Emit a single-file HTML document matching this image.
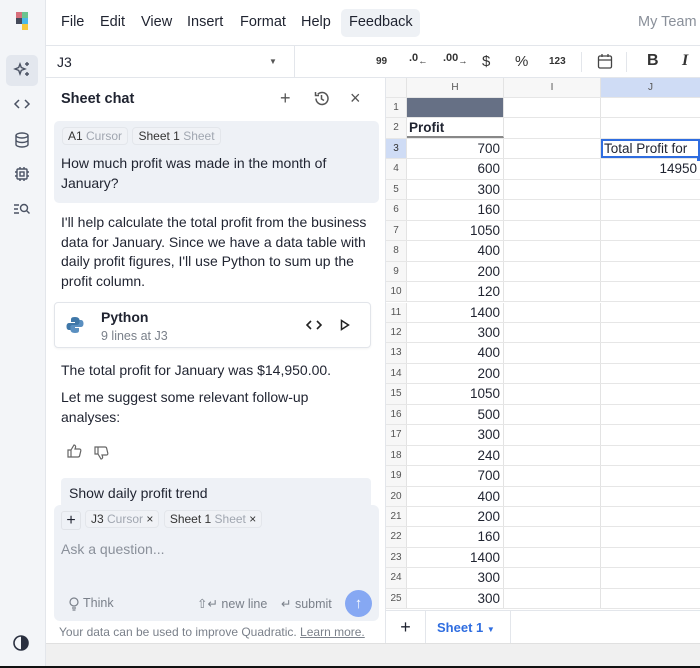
<!DOCTYPE html>
<html><head><meta charset="utf-8"><style>
*{box-sizing:border-box;margin:0;padding:0}
body{width:700px;height:668px;overflow:hidden;background:#fff;font-family:"Liberation Sans",sans-serif;color:#1f2330;position:relative}
.abs{position:absolute}
.rail{left:0;top:0;width:46px;height:666px;background:#f3f5f8;border-right:1px solid #e3e6eb}
.menu{left:46px;top:0;width:654px;height:46px;border-bottom:1px solid #e3e6eb;font-size:14.5px}
.menu span{position:absolute;top:14px}
.fbar{left:46px;top:46px;width:654px;height:32px;border-bottom:1px solid #e3e6eb}
.chat{left:46px;top:78px;width:340px;height:565px;border-right:1px solid #e3e6eb}
.t{font-size:14px;line-height:19.5px}
.chip{display:inline-block;border:1px solid #e3e6eb;border-radius:4px;padding:1px 5px;font-size:12px;color:#333;background:#f0f2f6}
.chip i{font-style:normal;color:#a0a6b0}
.grid{left:386px;top:78px;width:314px}
.row{position:absolute;left:0;width:314px;border-bottom:1px solid #e6e6e6;font-size:13.5px}
.rn{position:absolute;left:0;width:21px;text-align:center;font-size:10px;color:#555;background:#f7f7f7;height:100%;border-right:1px solid #e3e3e3}
.h{position:absolute;left:21px;width:97px;text-align:right;padding-right:3px;height:100%;border-right:1px solid #e3e3e3}
.i{position:absolute;left:118px;width:97px;height:100%;border-right:1px solid #e3e3e3}
.j{position:absolute;left:215px;width:99px;height:100%;text-align:right;padding-right:3px}
.ic{position:absolute;font-size:12px;color:#333}
</style></head><body>
<div class="abs rail">
 <div class="abs" style="left:16px;top:12px;width:6px;height:6px;background:#d76f7c"></div>
 <div class="abs" style="left:22px;top:12px;width:6px;height:6px;background:#6cc38f"></div>
 <div class="abs" style="left:16px;top:18px;width:6px;height:6px;background:#444a5a"></div>
 <div class="abs" style="left:22px;top:18px;width:6px;height:6px;background:#4ab8e8"></div>
 <div class="abs" style="left:22px;top:24px;width:6px;height:6px;background:#f7c93c"></div>
 <div class="abs" style="left:6px;top:55px;width:32px;height:31px;background:#e3e7ee;border-radius:5px"></div>
 <svg class="abs" style="left:13px;top:60px" width="20" height="20" viewBox="0 0 20 20" fill="none" stroke="#4a5263" stroke-width="1.4"><path d="M7 4l1.3 3.5L12 9l-3.7 1.4L7 14l-1.3-3.6L2 9l3.7-1.5z"/><path d="M14 2v4M12 4h4M14 12v4M12 14h4"/></svg>
 <svg class="abs" style="left:13px;top:96px" width="18" height="16" fill="none" stroke="#4a5263" stroke-width="1.5"><path d="M6 4L2 8l4 4M12 4l4 4-4 4"/></svg>
 <svg class="abs" style="left:14px;top:132px" width="16" height="16" fill="none" stroke="#4a5263" stroke-width="1.4"><ellipse cx="8" cy="3.5" rx="6" ry="2.5"/><path d="M2 3.5v9c0 1.4 2.7 2.5 6 2.5s6-1.1 6-2.5v-9M2 8c0 1.4 2.7 2.5 6 2.5s6-1.1 6-2.5"/></svg>
 <svg class="abs" style="left:14px;top:166px" width="16" height="16" fill="none" stroke="#4a5263" stroke-width="1.4"><rect x="3" y="3" width="10" height="10" rx="1"/><rect x="6" y="6" width="4" height="4"/><path d="M6 1v2M10 1v2M6 13v2M10 13v2M1 6h2M1 10h2M13 6h2M13 10h2"/></svg>
 <svg class="abs" style="left:13px;top:202px" width="18" height="14" fill="none" stroke="#4a5263" stroke-width="1.4"><path d="M1 3h5M1 7h4M1 11h5"/><circle cx="11" cy="6" r="3.5"/><path d="M13.5 8.5l3 3"/></svg>
 <svg class="abs" style="left:12px;top:634px" width="18" height="18"><circle cx="9" cy="9" r="7" fill="none" stroke="#2a3040" stroke-width="1.6"/><path d="M9 2a7 7 0 0 1 0 14z" fill="#2a3040"/></svg>
</div>
<div class="abs menu">
 <span style="left:15px">File</span><span style="left:54px">Edit</span><span style="left:95px">View</span><span style="left:141px">Insert</span><span style="left:194px">Format</span><span style="left:255px">Help</span>
 <div class="abs" style="left:295px;top:9px;width:79px;height:28px;background:#eef1f5;border-radius:5px"></div><span style="left:303px">Feedback</span>
 <span style="left:592px;color:#8a909a">My Team</span>
</div>
<div class="abs fbar">
 <span class="abs" style="left:11px;top:8px;font-size:14px">J3</span>
 <span class="abs" style="left:223px;top:11px;font-size:8px;color:#555">▼</span>
 <div class="abs" style="left:248px;top:0;width:1px;height:32px;background:#e3e6eb"></div>
 <span class="ic" style="left:330px;top:10px;font-size:10px;font-weight:bold">99</span>
 <span class="ic" style="left:363px;top:6px;font-size:11px;font-weight:bold">.0<sub>←</sub></span>
 <span class="ic" style="left:397px;top:6px;font-size:11px;font-weight:bold">.00<sub>→</sub></span>
 <span class="ic" style="left:436px;top:7px;font-size:15px">$</span>
 <span class="ic" style="left:469px;top:7px;font-size:15px">%</span>
 <span class="ic" style="left:503px;top:10px;font-size:10px;font-weight:bold">123</span>
 <div class="abs" style="left:535px;top:6px;width:1px;height:20px;background:#e3e6eb"></div>
 <svg class="abs" style="left:551px;top:7px" width="16" height="17" fill="none" stroke="#444" stroke-width="1.3"><rect x="1.5" y="3" width="13" height="12" rx="1.5"/><path d="M1.5 7h13M5 1v3M11 1v3"/></svg>
 <div class="abs" style="left:580px;top:6px;width:1px;height:20px;background:#e3e6eb"></div>
 <span class="ic" style="left:601px;top:6px;font-size:16px;font-weight:bold">B</span>
 <span class="ic" style="left:636px;top:6px;font-size:16px;font-style:italic;font-family:'Liberation Serif',serif;font-weight:bold">I</span>
</div>
<div class="abs chat">
 <span class="abs" style="left:15px;top:13px;font-size:14.5px;font-weight:bold">Sheet chat</span>
 <span class="abs" style="left:234px;top:10px;font-size:18px;color:#555">+</span>
 <svg class="abs" style="left:267px;top:12px" width="17" height="17" fill="none" stroke="#555" stroke-width="1.5"><path d="M3 8.5a6 6 0 1 0 1.8-4.3M2.5 2v3.5H6M8.5 5v4l2.5 1.5"/></svg>
 <span class="abs" style="left:304px;top:10px;font-size:18px;color:#555">×</span>
 <div class="abs" style="left:8px;top:43px;width:325px;height:82px;background:#eef1f6;border-radius:5px">
  <div class="abs" style="left:8px;top:6px"><span class="chip">A1 <i>Cursor</i></span> <span class="chip">Sheet 1 <i>Sheet</i></span></div>
  <div class="abs t" style="left:7px;top:33px;width:300px">How much profit was made in the month of January?</div>
 </div>
 <div class="abs t" style="left:15px;top:135px;width:310px">I'll help calculate the total profit from the business data for January. Since we have a data table with daily profit figures, I'll use Python to sum up the profit column.</div>
 <div class="abs" style="left:8px;top:224px;width:317px;height:46px;border:1px solid #e2e5ea;border-radius:4px;box-shadow:0 1px 2px rgba(0,0,0,.05)">
  <svg class="abs" style="left:11px;top:13px" width="18" height="18" viewBox="0 0 18 18"><path d="M9 1c-4 0-4 1.5-4 3v2h4v1H3c-2 0-2.5 2-2.5 3.5S1 14 3 14h1.5v-2.5C4.5 10 6 9 7.5 9h4c1.3 0 2-1 2-2V4c0-1.5-1.5-3-4.5-3z" fill="#3f77a8"/><path d="M9 17c4 0 4-1.5 4-3v-2H9v-1h6c2 0 2.5-2 2.5-3.5S17 4 15 4h-1.5v2.5c0 1.5-1.5 2.5-3 2.5h-4c-1.3 0-2 1-2 2v3c0 1.5 1.5 3 4.5 3z" fill="#5a8fc0"/></svg>
  <span class="abs" style="left:46px;top:6px;font-size:14px;font-weight:bold">Python</span>
  <span class="abs" style="left:46px;top:26px;font-size:12.5px;color:#7a808a">9 lines at J3</span>
  <svg class="abs" style="left:251px;top:15px" width="16" height="14" fill="none" stroke="#222" stroke-width="1.6"><path d="M5 3L1 7l4 4M11 3l4 4-4 4"/></svg>
  <svg class="abs" style="left:285px;top:16px" width="10" height="12" fill="none" stroke="#222" stroke-width="1.5"><path d="M1.5 1.5l7 4.5-7 4.5z"/></svg>
 </div>
 <div class="abs t" style="left:15px;top:283px">The total profit for January was $14,950.00.</div>
 <div class="abs t" style="left:15px;top:310px;width:300px">Let me suggest some relevant follow-up analyses:</div>
 <svg class="abs" style="left:21px;top:366px" width="15" height="14" fill="none" stroke="#666" stroke-width="1.2"><path d="M1 6h3v7H1zM4 6l3-5c1 0 2 1 1.5 2.5L8 5h4.5c1 0 1.5 1 1.3 1.8l-1.2 5c-.2.8-.8 1.2-1.6 1.2H4"/></svg>
 <svg class="abs" style="left:48px;top:368px" width="15" height="14" fill="none" stroke="#666" stroke-width="1.2"><path d="M1 1h3v7H1zM4 8l3 5c1 0 2-1 1.5-2.5L8 9h4.5c1 0 1.5-1 1.3-1.8l-1.2-5C12.4 1.4 11.8 1 11 1H4"/></svg>
 <div class="abs" style="left:15px;top:400px;width:310px;height:30px;background:#eef1f6;border-radius:4px"><span class="abs t" style="left:8px;top:6px">Show daily profit trend</span></div>
 <div class="abs" style="left:8px;top:427px;width:325px;height:116px;background:#eef1f6;border-radius:6px">
  <div class="abs" style="left:7px;top:6px;width:20px;height:19px;border:1px solid #e0e3e8;border-radius:3px;text-align:center;font-size:16px;line-height:17px">+</div>
  <div class="abs" style="left:31px;top:5px"><span class="chip" style="font-size:12px">J3 <i>Cursor</i> ×</span> <span class="chip" style="font-size:12px">Sheet 1 <i>Sheet</i> ×</span></div>
  <span class="abs t" style="left:7px;top:35px;color:#8a909a">Ask a question...</span>
  <svg class="abs" style="left:15px;top:92px" width="10" height="14" fill="none" stroke="#7a808a" stroke-width="1.2"><circle cx="5" cy="5" r="4"/><path d="M3 11h4M3.5 13h3"/></svg>
  <span class="abs" style="left:29px;top:91px;font-size:12.5px;color:#7a808a">Think</span>
  <span class="abs" style="left:143px;top:91px;font-size:12.5px;color:#7a808a">⇧↵ new line</span>
  <span class="abs" style="left:227px;top:91px;font-size:12.5px;color:#7a808a">↵ submit</span>
  <div class="abs" style="left:291px;top:85px;width:27px;height:27px;border-radius:50%;background:#86a8f3;color:#fff;text-align:center;font-size:15px;line-height:27px">↑</div>
 </div>
 <span class="abs" style="left:13px;top:547px;font-size:12px;color:#7a808a">Your data can be used to improve Quadratic. <u>Learn more.</u></span>
</div>
<div class="abs grid">
 <div class="row" style="top:0;height:20px;font-size:10px;color:#555;background:#f7f7f7">
  <div class="rn"></div><div class="h" style="text-align:center;padding:0;line-height:20px">H</div><div class="i" style="text-align:center;line-height:20px">I</div><div class="j" style="text-align:center;padding:0;line-height:20px;background:#cfdcf5">J</div>
 </div>
</div>
<div class="abs" id="rows" style="left:386px;top:98px;width:314px"></div>
<script>
var v=["","Profit",700,600,300,160,1050,400,200,120,1400,300,400,200,1050,500,300,240,700,400,200,160,1400,300,300];
var h="";for(var k=0;k<25;k++){var t=k*20.45;var hv=v[k];
var hs=k==0?"background:#667085":"";if(k==1)hs="text-align:left;font-weight:bold;padding-left:2px;border-bottom:2px solid #888";
var rs=k==2?"background:#cfdcf5;color:#333":"";
var jv=k==2?'<div style="position:absolute;inset:0;border:2px solid #2f6de0;text-align:left;padding-left:1px;line-height:16px">Total Profit for</div><div style="position:absolute;right:-2px;bottom:-3px;width:5px;height:5px;background:#2f6de0"></div>':(k==3?"14950":"");
h+='<div class="row" style="top:'+t+'px;height:20.45px;line-height:20px"><div class="rn" style="'+rs+'">'+(k+1)+'</div><div class="h" style="'+hs+'">'+hv+'</div><div class="i"></div><div class="j">'+jv+'</div></div>';}
document.getElementById("rows").innerHTML=h;
</script>
<div class="abs" style="left:386px;top:610px;width:314px;height:33px;border-top:1px solid #e3e6eb;background:#fff">
 <div class="abs" style="left:0;top:0;width:40px;height:33px;border-right:1px solid #e3e6eb;text-align:center;font-size:18px;line-height:33px">+</div>
 <div class="abs" style="left:40px;top:0;width:85px;height:33px;border-right:1px solid #e3e6eb;color:#2f6de0;font-size:13px;font-weight:bold;line-height:33px;padding-left:11px">Sheet 1 <span style="font-size:8px">▼</span></div>
</div>
<div class="abs" style="left:46px;top:643px;width:654px;height:23px;background:#f0f0f0;border-top:1px solid #e0e0e0"></div>
<div class="abs" style="left:0;top:666px;width:700px;height:2px;background:#111"></div>
</body></html>
